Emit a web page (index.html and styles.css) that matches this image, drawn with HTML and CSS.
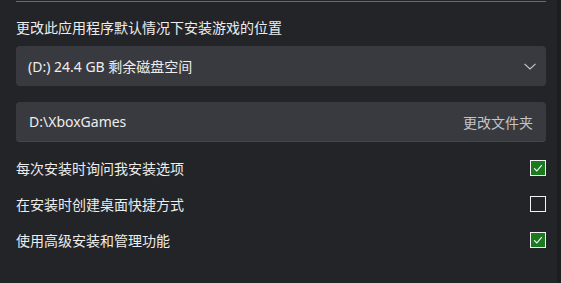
FILE: index.html
```html
<!DOCTYPE html>
<html lang="zh-CN">
<head>
<meta charset="utf-8">
<link rel="stylesheet" href="styles.css">
</head>
<body>
<div class="page">
  <div class="content">
    <div class="rule"></div>
    <div class="label">更改此应用程序默认情况下安装游戏的位置</div>
    <div class="select">
      <span class="select-text">(D:) 24.4 GB 剩余磁盘空间</span>
      <svg class="chevron" width="12" height="7" viewBox="0 0 12 7"><path d="M0.5 0.8 L6 6 L11.5 0.8" fill="none" stroke="#c8c8ca" stroke-width="1.1"/></svg>
    </div>
    <div class="field">
      <span class="field-text">D:\XboxGames</span>
      <span class="field-action">更改文件夹</span>
    </div>
    <div class="options">
      <div class="option">
        <span>每次安装时询问我安装选项</span>
        <span class="box checked"><svg width="14" height="14" viewBox="0 0 14 14"><path d="M3.2 7.4 L5.8 10 L10.8 4.2" fill="none" stroke="#ffffff" stroke-width="1.1"/></svg></span>
      </div>
      <div class="option">
        <span>在安装时创建桌面快捷方式</span>
        <span class="box"></span>
      </div>
      <div class="option">
        <span>使用高级安装和管理功能</span>
        <span class="box checked"><svg width="14" height="14" viewBox="0 0 14 14"><path d="M3.2 7.4 L5.8 10 L10.8 4.2" fill="none" stroke="#ffffff" stroke-width="1.1"/></svg></span>
      </div>
    </div>
  </div>
  <div class="strip"></div>
</div>
</body>
</html>
```
FILE: styles.css
```css
html, body {
  margin: 0;
  padding: 0;
  background: #232428;
}
body {
  font-family: "Segoe UI", "Noto Sans", "Noto Sans CJK SC", sans-serif;
  font-size: 14px;
  color: #ededed;
}
.page {
  display: flex;
  width: 561px;
  height: 283px;
  overflow: hidden;
}
.content {
  flex: 1;
  padding: 1px 11px 0 16px;
}
.strip {
  width: 4px;
  background: #1c1d20;
}
.rule {
  height: 1px;
  background: #6b6b70;
}
.label {
  margin-top: 16px;
  line-height: 20px;
  height: 20px;
}
.select {
  margin-top: 8px;
  height: 40px;
  background: #393a3f;
  border-radius: 4px;
  display: flex;
  align-items: center;
  justify-content: space-between;
  padding: 0 10px 0 12px;
}
.chevron {
  display: block;
}
.field {
  margin-top: 16px;
  height: 39px;
  background: #393a3f;
  border-bottom: 1px solid #45464b;
  border-radius: 4px;
  display: flex;
  align-items: center;
  justify-content: space-between;
  padding: 0 13px 0 13px;
}
.field-action {
  color: #c4c4c6;
}
.options {
  margin-top: 8px;
}
.option {
  height: 36px;
  display: flex;
  align-items: center;
  justify-content: space-between;
}
.box {
  width: 14px;
  height: 14px;
  border: 1px solid #f2f2f2;
  display: flex;
  align-items: center;
  justify-content: center;
}
.box.checked {
  background: #1a7a1f;
}
.box svg {
  display: block;
}
```
